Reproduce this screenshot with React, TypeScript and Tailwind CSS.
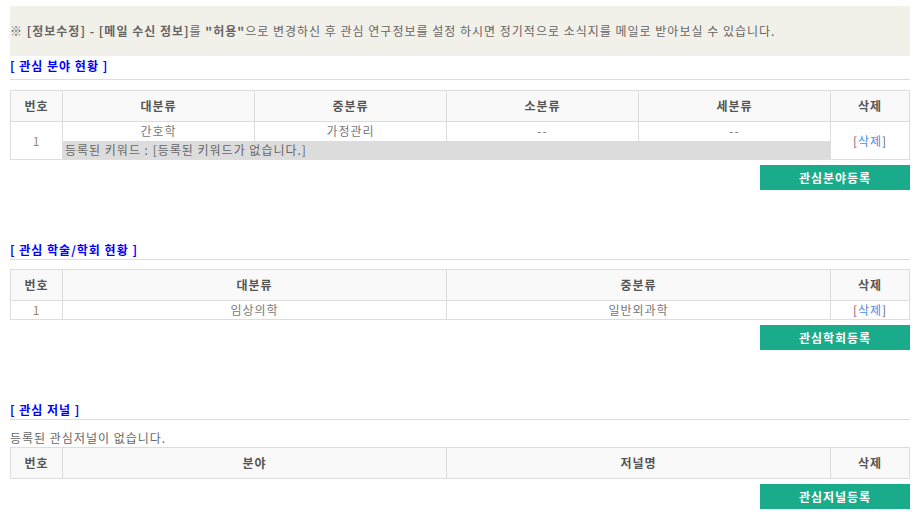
const font = { fontFamily: '"Malgun Gothic", "Noto Sans CJK KR", "Noto Sans", sans-serif' };

function SectionTitle({ children, pad = "pb-0" }: { children: string; pad?: string }) {
  return (
    <div className={"border-b border-[#dddddd] text-[12px] leading-[18px] font-bold text-[#0000ff] " + pad}>
      {children}
    </div>
  );
}

function GreenButton({ label }: { label: string }) {
  return (
    <div className="mt-[5px] flex justify-end">
      <button className="h-[25px] w-[150px] bg-[#1aab8a] text-[12px] leading-[25px] font-bold tracking-[1px] text-white">
        {label}
      </button>
    </div>
  );
}

function DeleteLink() {
  return (
    <span className="text-[#666666]">
      [<span className="text-[#4a8ee6]">삭제</span>]
    </span>
  );
}

const th = "h-[31px] border border-[#dddddd] bg-[#f9f9f9] text-center font-bold text-[#555555]";
const td = "h-[19px] border border-[#dddddd] p-0 text-center text-[#777777]";

export default function App() {
  return (
    <div
      className="min-h-[521px] bg-white pt-[6px] pr-[5px] pl-[10px] text-[12px] tracking-[1px] text-[#666666]"
      style={font}
    >
      <div className="flex h-[50px] items-center bg-[#f1f0e9] leading-[18px] text-[#666666]">
        <span>
          ※ <b>[정보수정] - [메일 수신 정보]</b>를 <b>"허용"</b>으로 변경하신 후 관심 연구정보를 설정 하시면 정기적으로 소식지를 메일로 받아보실 수 있습니다.
        </span>
      </div>

      <div className="mt-[1px]">
        <SectionTitle pad="pb-[4px]">[ 관심 분야 현황 ]</SectionTitle>
        <table className="mt-[10px] w-full table-fixed border-collapse leading-[18px]">
          <colgroup>
            <col className="w-[52px]" />
            <col />
            <col />
            <col />
            <col />
            <col className="w-[79px]" />
          </colgroup>
          <thead>
            <tr>
              <th className={th}>번호</th>
              <th className={th}>대분류</th>
              <th className={th}>중분류</th>
              <th className={th}>소분류</th>
              <th className={th}>세분류</th>
              <th className={th}>삭제</th>
            </tr>
          </thead>
          <tbody>
            <tr>
              <td rowSpan={2} className={td + " text-[#a5835a]"}>1</td>
              <td className={td + " border-b-0"}>간호학</td>
              <td className={td + " border-b-0"}>가정관리</td>
              <td className={td + " border-b-0"}>--</td>
              <td className={td + " border-b-0"}>--</td>
              <td rowSpan={2} className={td}>
                <DeleteLink />
              </td>
            </tr>
            <tr>
              <td colSpan={4} className="h-[19px] border-b border-[#dddddd] bg-[#dcdcdc] px-[2px] py-0 text-left text-[#666666]">
                등록된 키워드 : [등록된 키워드가 없습니다.]
              </td>
            </tr>
          </tbody>
        </table>
        <GreenButton label="관심분야등록" />
      </div>

      <div className="mt-[51px]">
        <SectionTitle>[ 관심 학술/학회 현황 ]</SectionTitle>
        <table className="mt-[9px] w-full table-fixed border-collapse leading-[18px]">
          <colgroup>
            <col className="w-[52px]" />
            <col />
            <col />
            <col className="w-[79px]" />
          </colgroup>
          <thead>
            <tr>
              <th className={th}>번호</th>
              <th className={th}>대분류</th>
              <th className={th}>중분류</th>
              <th className={th}>삭제</th>
            </tr>
          </thead>
          <tbody>
            <tr>
              <td className={td + " text-[#a5835a]"}>1</td>
              <td className={td}>임상의학</td>
              <td className={td}>일반외과학</td>
              <td className={td}>
                <DeleteLink />
              </td>
            </tr>
          </tbody>
        </table>
        <GreenButton label="관심학회등록" />
      </div>

      <div className="mt-[51px]">
        <SectionTitle>[ 관심 저널 ]</SectionTitle>
        <div className="mt-[9px] leading-[18px] text-[#666666]">등록된 관심저널이 없습니다.</div>
        <table className="w-full table-fixed border-collapse leading-[18px]">
          <colgroup>
            <col className="w-[52px]" />
            <col />
            <col />
            <col className="w-[79px]" />
          </colgroup>
          <thead>
            <tr>
              <th className={th}>번호</th>
              <th className={th}>분야</th>
              <th className={th}>저널명</th>
              <th className={th}>삭제</th>
            </tr>
          </thead>
        </table>
        <GreenButton label="관심저널등록" />
      </div>
    </div>
  );
}
